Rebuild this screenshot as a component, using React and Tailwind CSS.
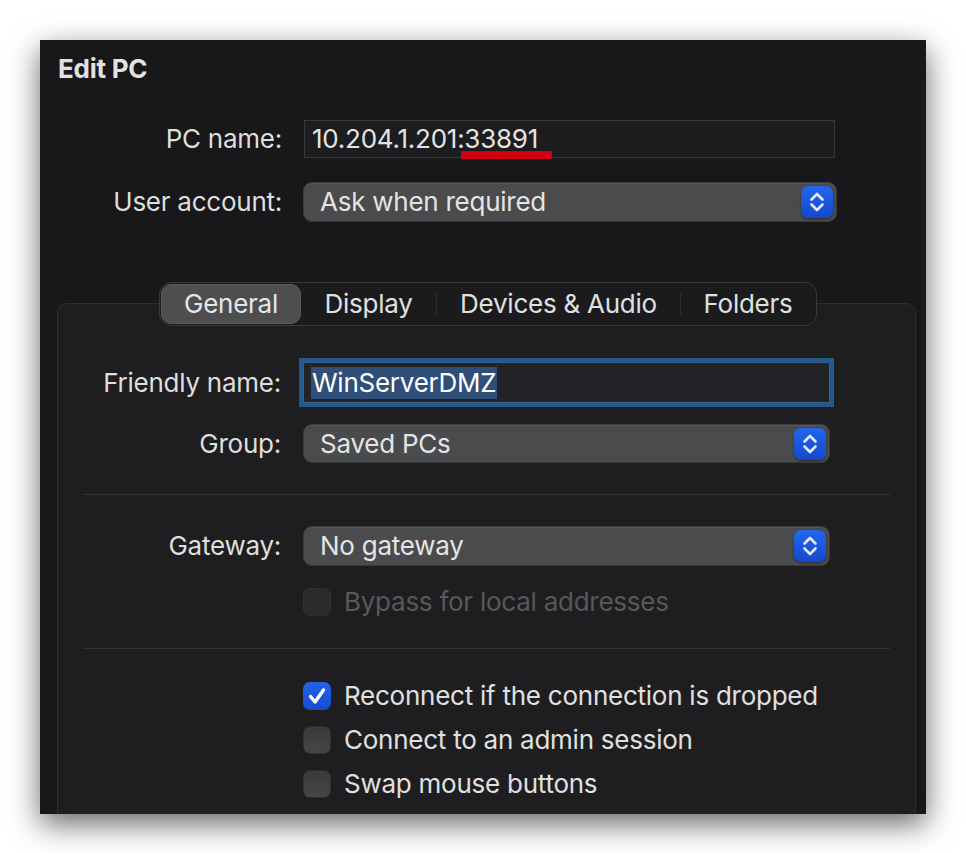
import React from "react";

function Chevrons() {
  return (
    <svg width="16" height="24" viewBox="0 0 16 24" fill="none">
      <path d="M2.5 9.5 L8 4 L13.5 9.5" stroke="#e2e9ff" strokeWidth="2.6" strokeLinecap="round" strokeLinejoin="round" />
      <path d="M2.5 14.5 L8 20 L13.5 14.5" stroke="#e2e9ff" strokeWidth="2.6" strokeLinecap="round" strokeLinejoin="round" />
    </svg>
  );
}

function Select({ text, w, h }) {
  return (
    <div
      className={`flex items-center justify-between rounded-[9px] bg-[#4a4b4d] border border-[#3a3a3c] shadow-[inset_0_1px_0_rgba(255,255,255,0.08)] pl-[16px] pr-[3px] ${w} ${h}`}
    >
      <span className="text-[#e4e4e4] text-[26px] leading-none">{text}</span>
      <div className="w-[32px] h-[32px] rounded-[7px] bg-gradient-to-b from-[#2466ea] to-[#1548cc] flex items-center justify-center shadow-[0_1px_2px_rgba(0,0,0,0.5)]">
        <Chevrons />
      </div>
    </div>
  );
}

function Checkbox({ checked, disabled, label }) {
  return (
    <div className="flex items-center">
      {checked ? (
        <div className="w-[28px] h-[28px] rounded-[7px] bg-gradient-to-b from-[#2363e8] to-[#164bcf] flex items-center justify-center">
          <svg width="22" height="22" viewBox="0 0 22 22" fill="none">
            <path d="M4.5 11.5 L9 17 L17.5 5" stroke="#ffffff" strokeWidth="3.4" strokeLinecap="round" strokeLinejoin="round" />
          </svg>
        </div>
      ) : disabled ? (
        <div className="w-[28px] h-[28px] rounded-[7px] bg-[#2b2b2d] border border-[#303032]" />
      ) : (
        <div className="w-[28px] h-[28px] rounded-[7px] bg-gradient-to-b from-[#3a3a3c] to-[#464648] border border-[#2f2f31]" />
      )}
      <span className={`ml-[13px] text-[26px] leading-none ${disabled ? "text-[#58585a]" : "text-[#e0e0e0]"}`}>{label}</span>
    </div>
  );
}

export default function App() {
  return (
    <div className="min-h-[854px] bg-white pt-[40px] pl-[40px] tracking-[-0.25px] [font-family:Inter,'Liberation_Sans',sans-serif]">
      <div className="w-[886px] h-[774px] bg-[#18181a] overflow-hidden flex flex-col shadow-[0_10px_28px_rgba(0,0,0,0.6)]">
        <div className="pl-[18px] pt-[13px] text-[26px] font-bold text-[#e2e2e2] leading-[32px]">Edit PC</div>

        <div className="mt-[35px] flex items-center">
          <div className="w-[242px] text-right text-[26px] text-[#dedede] leading-none">PC name:</div>
          <div className="ml-[22px] w-[531px] h-[38px] bg-[#1d1d1f] border border-[#38383a] relative flex items-center pl-[7px]">
            <span className="text-[26px] text-[#e4e4e4] leading-none">10.204.1.201:33891</span>
            <div className="absolute left-[156px] top-[30px] w-[91px] h-[8px] bg-[#d2000e]" />
          </div>
        </div>

        <div className="mt-[24px] flex items-center">
          <div className="w-[242px] text-right text-[26px] text-[#dedede] leading-none">User account:</div>
          <div className="ml-[21px]">
            <Select text="Ask when required" w="w-[534px]" h="h-[40px]" />
          </div>
        </div>

        <div className="mt-[60px] relative z-10 ml-[119px] -mb-[23px] w-[658px] h-[44px] rounded-[12px] border border-[#38383a] bg-[#1b1b1d] flex items-center px-[1px]">
          <div className="w-[140px] h-[40px] rounded-[10px] bg-[#4e4e50] border border-[#5a5a5c] flex items-center justify-center text-[26px] text-[#e6e6e6] leading-none">General</div>
          <div className="w-[135px] h-[40px] flex items-center justify-center text-[26px] text-[#e0e0e0] leading-none">Display</div>
          <div className="w-[1px] h-[22px] bg-[#2e2e30]" />
          <div className="w-[243px] h-[40px] flex items-center justify-center text-[26px] text-[#e0e0e0] leading-none">Devices &amp; Audio</div>
          <div className="w-[1px] h-[22px] bg-[#2e2e30]" />
          <div className="w-[134px] h-[40px] flex items-center justify-center text-[26px] text-[#e0e0e0] leading-none">Folders</div>
        </div>

        <div className="ml-[17px] w-[859px] grow rounded-t-[10px] border border-b-0 border-[#2e2e30] bg-[#1e1e20] flex flex-col pt-[58px]">
          <div className="flex items-center">
            <div className="w-[223px] text-right text-[26px] text-[#dedede] leading-none">Friendly name:</div>
            <div className="ml-[22px] w-[527px] h-[41px] bg-[#232427] border border-[#3a5f86] shadow-[0_0_0_4px_#215a8e] flex items-center pl-[7px]">
              <span className="bg-[#2f4e78] h-[32px] flex items-center px-[1px] text-[26px] text-white leading-none">WinServerDMZ</span>
            </div>
          </div>

          <div className="mt-[21px] flex items-center">
            <div className="w-[223px] text-right text-[26px] text-[#dedede] leading-none">Group:</div>
            <div className="ml-[22px]">
              <Select text="Saved PCs" w="w-[527px]" h="h-[39px]" />
            </div>
          </div>

          <div className="mt-[31px] mx-[25px] h-[1px] bg-[#333335]" />

          <div className="mt-[31px] flex items-center">
            <div className="w-[223px] text-right text-[26px] text-[#dedede] leading-none">Gateway:</div>
            <div className="ml-[22px]">
              <Select text="No gateway" w="w-[527px]" h="h-[40px]" />
            </div>
          </div>

          <div className="mt-[22px] ml-[245px]">
            <Checkbox disabled label="Bypass for local addresses" />
          </div>

          <div className="mt-[32px] mx-[25px] h-[1px] bg-[#333335]" />

          <div className="mt-[33px] ml-[245px] flex flex-col gap-[16px]">
            <Checkbox checked label="Reconnect if the connection is dropped" />
            <Checkbox label="Connect to an admin session" />
            <Checkbox label="Swap mouse buttons" />
          </div>
        </div>
      </div>
    </div>
  );
}
